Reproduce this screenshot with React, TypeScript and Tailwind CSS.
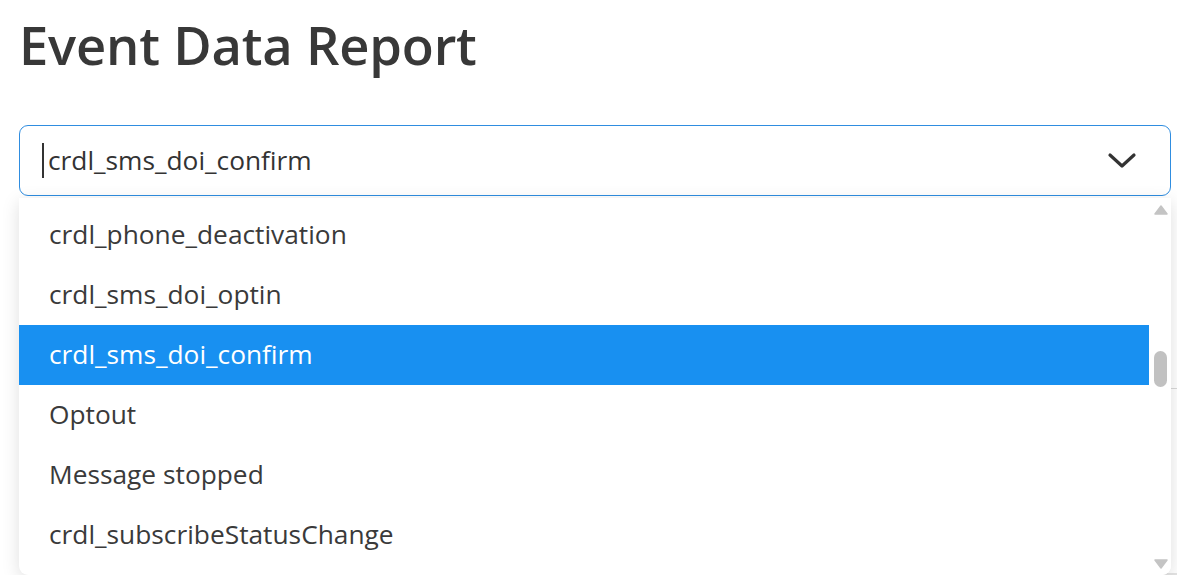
import React from 'react';

const options = [
  'crdl_email_deactivation',
  'crdl_phone_deactivation',
  'crdl_sms_doi_optin',
  'crdl_sms_doi_confirm',
  'Optout',
  'Message stopped',
  'crdl_subscribeStatusChange',
  'crdl_unsubscribe',
];

const selected = 'crdl_sms_doi_confirm';

const App: React.FC = () => {
  return (
    <div
      className="relative h-[575px] w-[1177px] overflow-hidden bg-white text-[#333]"
      style={{ fontFamily: '"Open Sans", "Noto Sans", sans-serif' }}
    >
      <div className="pl-[19px] pr-[6px]">
        <h1 className="pt-[9px] text-[52.5px] leading-[72px] font-semibold text-[#383838] tracking-[-0.2px]">
          Event Data Report
        </h1>

        <div className="relative mt-[44px]">
          {/* select input */}
          <div className="flex h-[71px] items-center rounded-[9px] border border-[#2f8de0] bg-white pl-[22px] pr-[33px]">
            <span className="h-[35px] w-[2px] bg-[#333]" />
            <span className="ml-[4px] text-[26.3px] text-[#333]">crdl_sms_doi_confirm</span>
            <svg className="ml-auto" width="30" height="18" viewBox="0 0 30 18" fill="none">
              <path d="M3 3 L15 14 L27 3" stroke="#333" strokeWidth="3.2" strokeLinecap="round" strokeLinejoin="round" />
            </svg>
          </div>

          {/* content behind the menu */}
          <div className="mt-[192px] ml-[16px] mr-[-6px] border-l border-t border-[#d9d9d9]">
            <div className="h-[184px]" />
            <div className="flex h-[40px] items-center gap-[400px] bg-[#e4e4e4] px-[70px] text-[20px] font-bold">
              <span>Timestamp</span>
              <span>Contact</span>
            </div>
          </div>

          {/* dropdown menu */}
          <div className="absolute left-0 right-0 top-[73px] h-[377px] overflow-hidden rounded-b-[9px] bg-white shadow-[0_4px_18px_rgba(0,0,0,0.13)]">
            <div className="flex h-full">
              <div className="flex-1 overflow-hidden">
                <div className="-mt-[53px]">
                  {options.map((o) => (
                    <div
                      key={o}
                      className={`flex h-[60px] items-center pl-[30px] text-[26.3px] ${
                        o === selected ? 'bg-[#1890f1] text-white' : 'text-[#3a3a3a]'
                      }`}
                    >
                      {o}
                    </div>
                  ))}
                </div>
              </div>
              {/* scrollbar */}
              <div className="relative w-[22px] bg-white">
                <svg className="absolute left-[5px] top-[7px]" width="14" height="10" viewBox="0 0 14 10">
                  <path d="M7 1 L13 9 L1 9 Z" fill="#c4c4c4" stroke="#c4c4c4" strokeLinejoin="round" strokeWidth="1.5" />
                </svg>
                <div className="absolute left-[5px] top-[153px] h-[36px] w-[13px] rounded-full bg-[#c1c1c1]" />
                <svg className="absolute left-[5px] bottom-[6px]" width="14" height="10" viewBox="0 0 14 10">
                  <path d="M1 1 L13 1 L7 9 Z" fill="#c4c4c4" stroke="#c4c4c4" strokeLinejoin="round" strokeWidth="1.5" />
                </svg>
              </div>
            </div>
          </div>
        </div>
      </div>
    </div>
  );
};

export default App;
